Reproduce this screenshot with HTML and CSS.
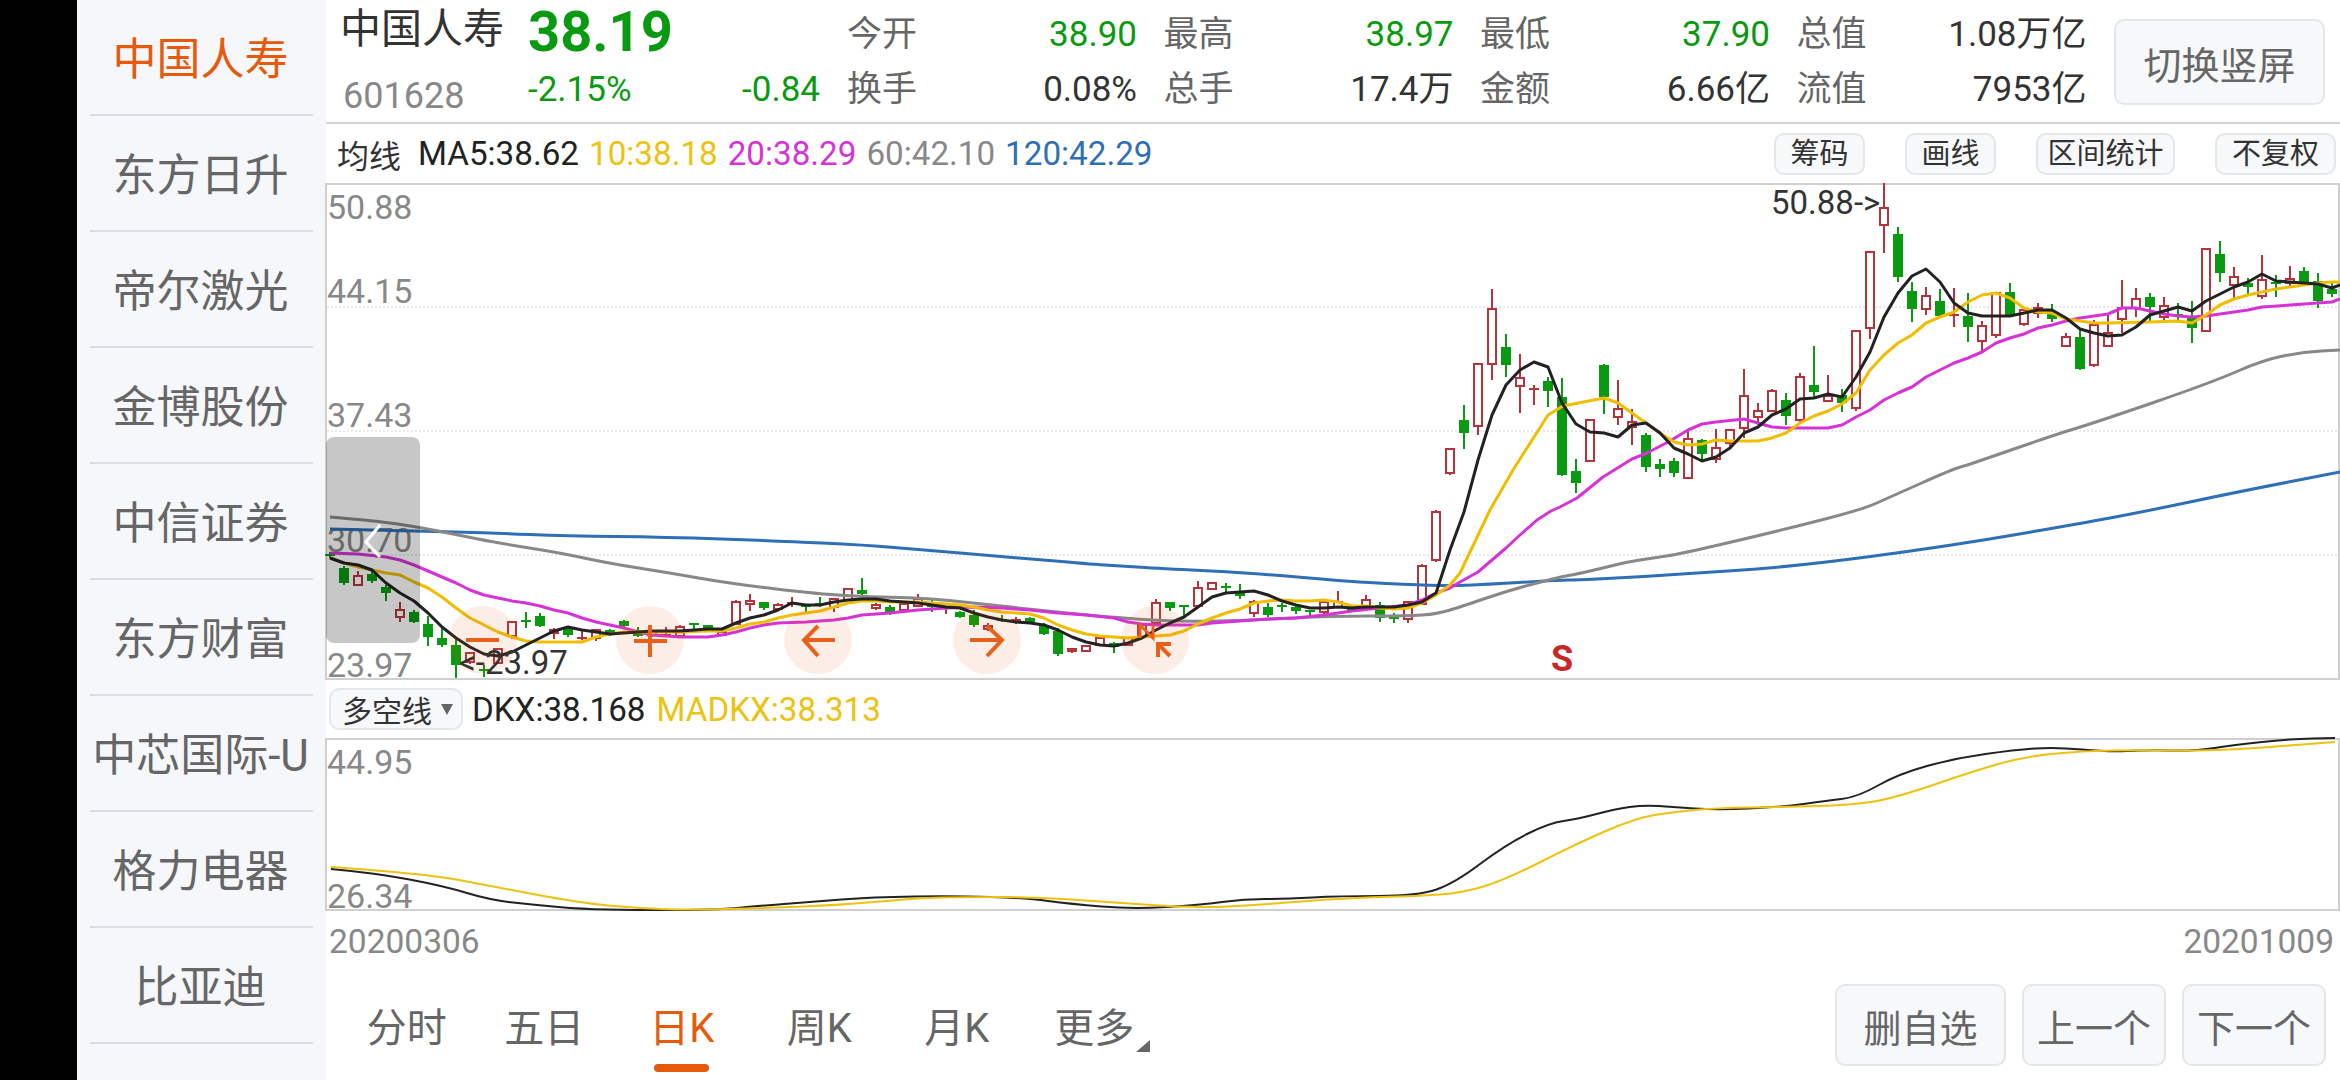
FILE: index.html
```html
<!DOCTYPE html>
<html lang="zh-CN">
<head>
    <meta charset="UTF-8">
    <meta name="viewport" content="width=device-width, initial-scale=1.0">
    <title>中国人寿 日K</title>
    <link rel="stylesheet" href="styles.css">
</head>
<body>
    <!-- Stock list -->
    <ul class="stock-list">
        <li class="stock-item active">中国人寿</li>
        <li class="stock-item">东方日升</li>
        <li class="stock-item">帝尔激光</li>
        <li class="stock-item">金博股份</li>
        <li class="stock-item">中信证券</li>
        <li class="stock-item">东方财富</li>
        <li class="stock-item">中芯国际-U</li>
        <li class="stock-item">格力电器</li>
        <li class="stock-item">比亚迪</li>
    </ul>

    <div class="main">
        <!-- Quote header -->
        <header class="quote">
            <div class="q-id">
                <div class="q-name">中国人寿</div>
                <div class="q-code">601628</div>
            </div>
            <div class="q-price">
                <div class="q-last">38.19</div>
                <div class="q-change"><span>-2.15%</span><span>-0.84</span></div>
            </div>
            <div class="q-stats">
                <div class="stat"><span class="stat-label">今开</span><span class="down">38.90</span></div>
                <div class="stat"><span class="stat-label">最高</span><span class="down">38.97</span></div>
                <div class="stat"><span class="stat-label">最低</span><span class="down">37.90</span></div>
                <div class="stat"><span class="stat-label">总值</span><span>1.08万亿</span></div>
                <div class="stat"><span class="stat-label">换手</span><span>0.08%</span></div>
                <div class="stat"><span class="stat-label">总手</span><span>17.4万</span></div>
                <div class="stat"><span class="stat-label">金额</span><span>6.66亿</span></div>
                <div class="stat"><span class="stat-label">流值</span><span>7953亿</span></div>
            </div>
            <button class="btn btn-rotate">切换竖屏</button>
        </header>

        <!-- Moving averages and tools -->
        <div class="ma-row">
            <span class="ma-title">均线</span>
            <span class="c-black">MA5:38.62</span>
            <span class="c-yellow">10:38.18</span>
            <span class="c-magenta">20:38.29</span>
            <span class="c-gray">60:42.10</span>
            <span class="c-blue">120:42.29</span>
            <div class="tools">
                <button class="btn tool">筹码</button>
                <button class="btn tool">画线</button>
                <button class="btn tool tool-wide">区间统计</button>
                <button class="btn tool tool-mid">不复权</button>
            </div>
        </div>

        <svg id="kline" class="chart chart-k" viewBox="326 183 2014 497"></svg>

        <!-- Indicator -->
        <div class="indicator-row">
            <div class="btn indicator-select">多空线<span class="select-arrow"></span></div>
            <span class="c-black">DKX:38.168</span>
            <span class="c-yellow">MADKX:38.313</span>
        </div>

        <svg id="dkx" class="chart chart-dkx" viewBox="326 738 2014 173"></svg>

        <div class="dates"><span>20200306</span><span>20201009</span></div>

        <!-- Period tabs and actions -->
        <div class="bottom">
            <nav class="tabs">
                <a class="tab">分时</a>
                <a class="tab">五日</a>
                <a class="tab active">日K</a>
                <a class="tab">周K</a>
                <a class="tab">月K</a>
                <a class="tab tab-more">更多</a>
            </nav>
            <div class="actions">
                <button class="btn action action-wide">删自选</button>
                <button class="btn action">上一个</button>
                <button class="btn action">下一个</button>
            </div>
        </div>
    </div>

    <script src="chart.js"></script>
</body>
</html>
```

FILE: styles.css
```css
/* General Styles */
html, body {
    margin: 0;
    padding: 0;
}
body {
    display: flex;
    width: 2340px;
    height: 1080px;
    overflow: hidden;
    padding-left: 77px;
    box-sizing: border-box;
    background: #000;
    color: #333;
    font-family: Roboto, "Noto Sans CJK SC", sans-serif;
}
.btn {
    box-sizing: border-box;
    margin: 0;
    padding: 0;
    border: 2px solid #e4e7ea;
    border-radius: 10px;
    background: #f7f8fa;
    font-family: inherit;
    color: #666;
}

/* Stock list */
.stock-list {
    flex: 0 0 249px;
    margin: 0;
    padding: 0 13px;
    box-sizing: border-box;
    list-style: none;
    background: #f5f7fa;
}
.stock-item {
    display: flex;
    align-items: center;
    justify-content: center;
    height: 116px;
    box-sizing: border-box;
    padding: 0 2px 2px 0;
    border-bottom: 2px solid #d9dee3;
    font-size: 44px;
    color: #666;
    white-space: nowrap;
}
.stock-item.active {
    color: #e65a0c;
}

/* Main column */
.main {
    flex: 1;
    display: flex;
    flex-direction: column;
    min-width: 0;
    background: #fff;
}

/* Quote header */
.quote {
    display: flex;
    flex: 0 0 124px;
    box-sizing: border-box;
    padding-left: 14px;
    border-bottom: 2px solid #d4d4d4;
}
.q-id {
    flex: 0 0 188px;
}
.q-name {
    height: 62px;
    line-height: 59px;
    font-size: 41px;
    color: #333;
}
.q-code {
    height: 56px;
    padding-left: 3px;
    line-height: 68px;
    font-size: 36px;
    color: #888;
}
.q-price {
    flex: 0 0 292px;
}
.q-last {
    height: 62px;
    line-height: 64px;
    font-size: 56px;
    font-weight: bold;
    color: #0a9a12;
}
.q-change {
    display: flex;
    justify-content: space-between;
    height: 56px;
    line-height: 56px;
    font-size: 35px;
    color: #0a9a12;
}
.q-stats {
    display: grid;
    grid-template-columns: repeat(4, 290px);
    grid-template-rows: 55px 55px;
    column-gap: 26.5px;
    flex: 0 0 auto;
    margin: 7px 0 0 27px;
    font-size: 35px;
}
.stat {
    display: flex;
    justify-content: space-between;
    line-height: 56px;
    color: #333;
}
.stat-label {
    color: #666;
}
.down {
    color: #0a9a12;
}
.btn-rotate {
    flex: 0 0 211px;
    height: 86px;
    margin: 19px 0 0 27.5px;
    font-size: 38px;
}

/* MA row */
.ma-row {
    display: flex;
    align-items: center;
    flex: 0 0 59px;
    padding-left: 11px;
    gap: 10px;
    font-size: 33.2px;
}
.ma-title {
    margin-right: 7px;
    font-size: 32px;
}
.c-black { color: #222; }
.c-yellow { color: #eec211; }
.c-magenta { color: #d633d6; }
.c-gray { color: #888; }
.c-blue { color: #2f6fb5; }
.tools {
    display: flex;
    gap: 40px;
    margin-left: auto;
    padding-right: 4px;
}
.tool {
    width: 91px;
    height: 42px;
    font-size: 29px;
    line-height: 36px;
    color: #333;
}
.tool-wide {
    width: 139px;
}
.tool-mid {
    width: 121px;
}

/* Charts */
.chart {
    display: block;
    flex: none;
    width: 2014px;
    overflow: visible;
}
.chart-k {
    height: 497px;
}
.chart-dkx {
    height: 173px;
}
.frame {
    fill: none;
    stroke: #cfcfcf;
    stroke-width: 2;
}
.grid-line {
    stroke: #d2d2d2;
    stroke-width: 1;
    stroke-dasharray: 2 2;
}
.axis-label {
    font-size: 34px;
    fill: #888;
}
.mark-label {
    font-size: 33px;
    fill: #333;
}
.sell-mark {
    font-size: 36px;
    font-weight: bold;
    fill: #c62828;
}
.wick-r { stroke: #b5343c; stroke-width: 2; }
.wick-g { stroke: #0a9a12; stroke-width: 2; }
.body-r { fill: #fff; stroke: #b5343c; stroke-width: 2; }
.body-g { fill: #0a9a12; }
.line {
    fill: none;
    stroke-width: 3;
    stroke-linejoin: round;
}
.line-thin {
    stroke-width: 2;
}
.l-black { stroke: #222; }
.l-yellow { stroke: #eec211; }
.l-yellow-k { stroke: #f0bd00; }
.l-magenta { stroke: #d633d6; }
.l-gray { stroke: #888; }
.l-blue { stroke: #2f6fb5; }
.hot-circle {
    fill: rgba(230, 90, 12, 0.1);
}
.hot-icon {
    fill: none;
    stroke: #e8611a;
    stroke-width: 4;
}
.hot-n {
    stroke-width: 3;
}
.scroll-thumb {
    fill: rgba(0, 0, 0, 0.22);
}
.scroll-chevron {
    fill: none;
    stroke: #fff;
    stroke-width: 3;
}

/* Indicator row */
.indicator-row {
    display: flex;
    align-items: center;
    flex: 0 0 58px;
    gap: 11px;
    padding-left: 3px;
    font-size: 33.2px;
}
.indicator-select {
    display: flex;
    align-items: center;
    width: 134px;
    height: 42px;
    padding-left: 11px;
    margin-right: -2px;
    font-size: 30px;
    color: #333;
}
.select-arrow {
    width: 0;
    height: 0;
    margin-left: 9px;
    border-left: 6px solid transparent;
    border-right: 6px solid transparent;
    border-top: 11px solid #666;
}

/* Dates */
.dates {
    display: flex;
    justify-content: space-between;
    flex: 0 0 60px;
    align-items: center;
    padding: 0 6px 0 3px;
    font-size: 33.5px;
    color: #888;
}

/* Bottom bar */
.bottom {
    display: flex;
    justify-content: space-between;
    flex: 1;
}
.tabs {
    display: flex;
    padding-left: 12px;
}
.tab {
    position: relative;
    width: 137.5px;
    padding-top: 33px;
    text-align: center;
    font-size: 40px;
    line-height: 50px;
    color: #666;
}
.tab.active {
    color: #e65a0c;
}
.tab.active::after {
    content: "";
    position: absolute;
    left: 41px;
    bottom: 8px;
    width: 55px;
    height: 8px;
    border-radius: 4px;
    background: #e65a0c;
}
.tab-more::after {
    content: "";
    position: absolute;
    right: 13px;
    top: 69px;
    width: 0;
    height: 0;
    border-left: 14px solid transparent;
    border-bottom: 12px solid #666;
}
.actions {
    display: flex;
    gap: 16px;
    padding: 13px 14px 0 0;
}
.action {
    width: 144px;
    height: 82px;
    font-size: 38px;
}
.action-wide {
    width: 171px;
}
```

FILE: chart.js
```js
const SVG_NS = "http://www.w3.org/2000/svg";

// Candles, one every 14px from x=330: [colour, body top, body bottom, wick top, wick bottom]
const candles = [
    ["g",555,556,552,558],["g",568,583,566,585],["r",576,585,571,585],["g",574,581,571,583],
    ["g",587,593,585,601],["r",610,617,602,622],["g",612,622,610,623],["g",624,637,616,646],
    ["g",638,645,627,647],["g",645,665,638,678],["r",653,662,652,664],["g",670,671,665,677],
    ["r",649,663,648,664],["r",622,636,621,639],["g",621,622,612,628],["g",616,626,613,627],
    ["r",630,633,628,639],["g",628,635,626,637],["r",638,639,630,640],["r",630,638,629,641],
    ["g",630,634,629,636],["g",621,626,620,628],["g",633,636,627,637],["r",632,635,630,637],
    ["r",635,636,627,637],["r",627,636,625,637],["g",624,625,624,630],["g",625,630,625,631],
    ["r",632,635,631,636],["r",602,624,600,625],["r",601,604,594,611],["g",602,608,602,610],
    ["r",605,609,603,611],["r",603,604,597,607],["g",606,607,604,613],["g",604,605,597,607],
    ["r",599,607,599,612],["r",589,600,588,601],["g",590,594,578,595],["r",605,608,603,610],
    ["g",607,613,605,615],["r",604,610,603,611],["r",599,606,594,607],["g",604,607,598,612],
    ["r",608,609,607,614],["g",612,617,611,618],["g",615,625,610,627],["r",626,629,623,631],
    ["g",620,621,615,622],["r",620,621,617,624],["g",618,622,617,623],["g",625,634,623,635],
    ["g",631,654,628,656],["r",649,651,648,653],["r",646,651,645,652],["r",638,645,635,646],
    ["g",643,647,642,653],["r",638,645,637,646],["r",625,637,624,638],["r",603,623,599,624],
    ["g",602,608,602,611],["g",606,607,606,618],["r",588,606,581,608],["r",583,589,582,590],
    ["g",587,588,583,592],["g",591,596,584,599],["r",602,613,600,617],["g",607,615,603,617],
    ["g",606,607,603,612],["g",607,611,606,614],["g",611,612,611,617],["r",602,612,600,614],
    ["r",602,607,591,608],["g",608,610,607,612],["r",600,607,595,608],["g",605,618,602,622],
    ["g",618,619,613,623],["r",602,619,601,623],["r",566,604,564,605],["r",512,560,510,562],
    ["r",449,473,448,475],["g",420,433,405,449],["r",364,426,363,435],["r",309,364,289,380],
    ["g",347,365,334,377],["r",378,386,354,413],["r",389,390,385,405],["g",381,391,377,407],
    ["g",397,475,378,476],["g",471,483,459,493],["r",420,461,419,462],["g",365,397,364,414],
    ["r",409,417,380,425],["r",422,427,409,445],["g",435,467,433,472],["g",464,469,459,477],
    ["g",461,473,458,477],["r",439,478,429,479],["g",440,454,439,460],["r",448,459,429,463],
    ["r",430,443,429,447],["r",396,428,369,438],["r",411,417,403,425],["r",391,411,389,412],
    ["g",400,416,393,425],["r",377,420,373,423],["g",385,392,346,397],["r",396,401,375,402],
    ["g",395,403,389,412],["r",331,408,330,411],["r",252,328,251,339],["r",208,225,183,253],
    ["g",234,277,227,282],["g",291,309,282,322],["r",296,309,287,315],["g",301,316,289,317],
    ["r",315,316,288,327],["g",316,327,293,342],["r",326,341,321,351],["r",293,335,292,338],
    ["g",292,316,283,317],["r",310,324,309,326],["r",308,313,303,318],["g",311,319,304,322],
    ["r",337,346,333,347],["g",337,369,330,370],["r",325,365,320,367],["r",333,346,315,347],
    ["r",308,319,280,333],["r",299,308,288,317],["g",297,307,293,323],["r",306,317,297,320],
    ["g",315,316,303,321],["g",316,328,301,343],["r",249,331,248,332],["g",254,273,241,282],
    ["r",277,285,267,298],["g",283,287,278,294],["r",280,296,255,299],["g",283,284,275,297],
    ["r",279,283,266,286],["g",271,283,267,284],["g",281,301,273,308],["g",289,294,283,297]
];

const ma5 = "330,558 344,563 358,565 372,570 386,583 400,593 414,601 428,613 442,627 456,638 470,647 484,654 498,656 512,652 526,645 540,638 554,631 568,627 582,630 596,632 610,634 624,633 638,632 652,631 680,631 708,629 722,629 736,623 750,618 764,615 778,610 792,603 806,605 820,605 834,602 848,600 862,599 876,599 890,601 904,602 918,603 932,605 946,607 960,608 974,613 988,617 1002,620 1016,622 1030,623 1044,625 1058,630 1072,637 1086,642 1100,645 1114,646 1128,643 1142,638 1156,630 1170,623 1184,617 1198,607 1212,597 1226,593 1240,592 1254,591 1268,595 1282,601 1296,605 1310,608 1324,608 1338,607 1352,608 1366,607 1380,607 1394,607 1408,605 1422,602 1436,593 1450,550 1464,512 1478,460 1492,415 1506,385 1520,370 1534,362 1548,367 1562,403 1576,424 1590,432 1604,433 1618,437 1632,425 1646,423 1660,433 1674,448 1688,454 1702,461 1716,457 1730,448 1744,433 1758,427 1772,415 1786,409 1800,399 1814,398 1828,394 1842,397 1856,377 1870,352 1884,317 1898,293 1912,276 1926,269 1940,282 1954,303 1968,313 1982,316 2010,316 2024,313 2038,310 2052,310 2066,318 2080,329 2094,333 2108,336 2122,335 2136,327 2150,315 2164,311 2178,307 2192,311 2206,301 2220,294 2234,287 2248,282 2262,274 2276,281 2290,282 2304,283 2318,284 2332,288 2340,285";
const ma10 = "330,558 344,563 358,567 372,570 386,573 400,575 414,582 428,588 442,597 456,608 470,618 484,625 498,632 512,637 526,641 540,642 568,642 582,642 596,637 610,634 624,632 680,632 708,631 722,631 736,628 750,624 764,622 778,618 792,615 806,613 820,611 834,607 848,603 862,601 876,601 890,602 918,602 932,603 946,604 960,605 974,607 988,610 1002,612 1016,613 1030,614 1044,618 1058,625 1072,630 1086,634 1100,636 1114,637 1128,638 1142,637 1156,636 1170,635 1184,631 1198,624 1212,618 1226,613 1240,609 1254,603 1268,601 1282,600 1296,601 1310,601 1324,600 1338,602 1352,606 1366,606 1380,608 1394,609 1408,608 1422,603 1436,595 1450,585 1460,573 1490,510 1513,470 1548,415 1563,406 1604,398 1618,403 1632,413 1646,423 1660,433 1674,442 1688,445 1702,444 1716,440 1730,441 1758,441 1772,438 1786,433 1800,423 1814,416 1828,411 1842,404 1856,393 1870,370 1884,355 1898,343 1912,335 1926,323 1940,317 1954,312 1968,302 1982,295 1996,293 2010,298 2024,308 2038,312 2052,313 2066,319 2080,321 2094,323 2108,323 2150,322 2178,321 2192,323 2206,315 2220,305 2234,299 2248,295 2262,292 2276,289 2290,287 2304,285 2318,283 2332,282 2340,282";
const ma20 = "330,553 358,554 386,557 400,560 414,565 428,571 442,577 456,583 470,590 484,595 498,598 512,601 526,603 540,606 554,610 568,613 582,618 596,622 610,625 624,628 638,632 652,635 666,636 680,637 708,637 722,635 736,632 750,628 764,625 778,623 806,622 834,620 848,618 862,615 890,613 918,610 946,608 974,607 1002,608 1030,610 1058,613 1086,615 1114,618 1128,622 1142,624 1157,625 1198,625 1212,623 1240,621 1268,619 1296,618 1324,615 1352,611 1380,608 1408,605 1422,600 1436,593 1450,588 1460,582 1478,572 1492,560 1506,548 1520,535 1537,520 1551,511 1560,507 1577,498 1603,477 1632,459 1647,453 1670,441 1688,430 1702,424 1716,422 1744,419 1758,423 1772,427 1786,428 1828,428 1842,425 1856,417 1870,410 1884,400 1898,393 1912,387 1926,377 1940,370 1954,363 1968,358 1982,352 1996,343 2010,338 2024,334 2038,328 2052,325 2066,321 2080,318 2094,316 2108,314 2122,308 2136,308 2150,311 2164,314 2178,316 2192,317 2206,316 2220,314 2234,312 2248,310 2262,307 2290,305 2318,303 2332,302 2340,299";
const ma60 = "330,517 377,521 418,527 458,535 498,543 561,553 607,563 664,572 733,584 819,594 871,597 928,598 1009,607 1066,613 1120,618 1184,622 1253,620 1333,616 1407,616 1437,614 1460,607 1510,590 1560,577 1577,574 1603,568 1627,562 1653,558 1680,554 1770,533 1861,510 1888,498 1953,469 1968,465 2054,435 2097,422 2213,382 2263,360 2303,352 2340,350";
const ma120 = "330,529 418,531 492,533 567,536 664,537 779,541 865,545 923,550 1009,557 1089,564 1120,566 1170,569 1253,573 1353,582 1420,585 1460,586 1560,580 1577,580 1617,578 1653,576 1680,574 1791,567 1950,546 2089,522 2152,510 2237,492 2340,472";

const dkx = "331,869 375,873 444,886 490,900 536,905 581,909 635,910 689,910 727,909 757,906 811,902 872,897 956,896 1025,898 1071,904 1132,909 1200,905 1244,899 1287,899 1338,896 1418,896 1455,883 1505,845 1549,823 1578,819 1615,809 1644,805 1673,807 1716,810 1782,807 1825,801 1858,797 1898,774 1956,758 2015,750 2055,747 2109,752 2145,750 2196,751 2233,745 2291,739 2335,738";
const madkx = "331,867 428,874 490,886 581,903 635,908 689,910 765,908 842,905 918,898 964,897 1033,897 1109,902 1178,907 1229,907 1345,898 1418,896 1462,893 1505,880 1578,843 1636,818 1673,812 1716,808 1782,807 1855,805 1898,797 1971,772 2022,757 2080,751 2145,750 2218,751 2335,742";

function add(svg, tag, attrs, text) {
    const el = document.createElementNS(SVG_NS, tag);
    for (const key in attrs) {
        el.setAttribute(key, attrs[key]);
    }
    if (text) {
        el.textContent = text;
    }
    svg.appendChild(el);
    return el;
}

// Round the corners of a sparse line: curve through the midpoints of its segments
function smoothPath(points) {
    const pts = points.split(" ").map(function (p) {
        return p.split(",").map(Number);
    });
    let d = "M" + pts[0].join(" ");
    for (let i = 1; i < pts.length - 1; i++) {
        const midX = (pts[i][0] + pts[i + 1][0]) / 2;
        const midY = (pts[i][1] + pts[i + 1][1]) / 2;
        d += "Q" + pts[i].join(" ") + " " + midX + " " + midY;
    }
    return d + "L" + pts[pts.length - 1].join(" ");
}

function drawFrame(svg, top, bottom) {
    add(svg, "rect", { class: "frame", x: 326, y: top, width: 2013, height: bottom - top });
}

function drawCandles(svg) {
    candles.forEach(function (c, i) {
        const x = 330 + i * 14;
        const kind = c[0];
        add(svg, "line", { class: "wick-" + kind, x1: x, x2: x, y1: c[3], y2: c[4] });
        if (c[2] - c[1] <= 1) {
            // doji: just a short tick
            add(svg, "line", { class: "wick-" + kind, x1: x - 5, x2: x + 5, y1: c[1], y2: c[1] });
        } else if (kind === "r") {
            add(svg, "rect", { class: "body-r", x: x - 4, y: c[1], width: 8, height: c[2] - c[1] });
        } else {
            add(svg, "rect", { class: "body-g", x: x - 5, y: c[1], width: 10, height: c[2] - c[1] });
        }
    });
}

function drawHotspots(svg) {
    [483, 650, 818, 987, 1155].forEach(function (x) {
        add(svg, "circle", { class: "hot-circle", cx: x, cy: 640, r: 34 });
    });
    const icons = [
        "M466 640H499",
        "M634 641H667M650 625V657",
        "M835 640H804M818 626L804 640L818 656",
        "M970 640H1002M987 626L1002 640L987 656",
        "M1171 644H1158V657M1158 644L1170 656"
    ];
    icons.forEach(function (d) {
        add(svg, "path", { class: "hot-icon", d: d });
    });
    add(svg, "path", { class: "hot-icon hot-n", d: "M1140 638V625L1153 638V625" });
}

function drawKline() {
    const svg = document.getElementById("kline");
    drawFrame(svg, 184, 679);
    [307, 431, 555].forEach(function (y) {
        add(svg, "line", { class: "grid-line", x1: 327, x2: 2338, y1: y, y2: y });
    });
    [["50.88", 219], ["44.15", 303], ["37.43", 427], ["30.70", 552], ["23.97", 677]].forEach(function (l) {
        add(svg, "text", { class: "axis-label", x: 327, y: l[1] }, l[0]);
    });

    drawCandles(svg);

    add(svg, "path", { class: "line l-blue", d: smoothPath(ma120) });
    add(svg, "path", { class: "line l-gray", d: smoothPath(ma60) });
    add(svg, "polyline", { class: "line l-magenta", points: ma20 });
    add(svg, "polyline", { class: "line l-yellow-k", points: ma10 });
    add(svg, "polyline", { class: "line l-black", points: ma5 });

    drawHotspots(svg);

    add(svg, "text", { class: "mark-label", x: 1771, y: 214 }, "50.88->");
    add(svg, "text", { class: "mark-label", x: 459, y: 674 }, "<-23.97");
    add(svg, "text", { class: "sell-mark", x: 1562, y: 671, "text-anchor": "middle" }, "S");

    // scroll thumb at the left edge
    add(svg, "rect", { class: "scroll-thumb", x: 326, y: 437, width: 94, height: 206, rx: 8 });
    add(svg, "path", { class: "scroll-chevron", d: "M380 525L366 542L380 557" });
}

function drawDkx() {
    const svg = document.getElementById("dkx");
    drawFrame(svg, 739, 910);
    add(svg, "text", { class: "axis-label", x: 327, y: 774 }, "44.95");
    add(svg, "text", { class: "axis-label", x: 327, y: 908 }, "26.34");
    add(svg, "path", { class: "line line-thin l-black", d: smoothPath(dkx) });
    add(svg, "path", { class: "line line-thin l-yellow", d: smoothPath(madkx) });
}

drawKline();
drawDkx();
```
